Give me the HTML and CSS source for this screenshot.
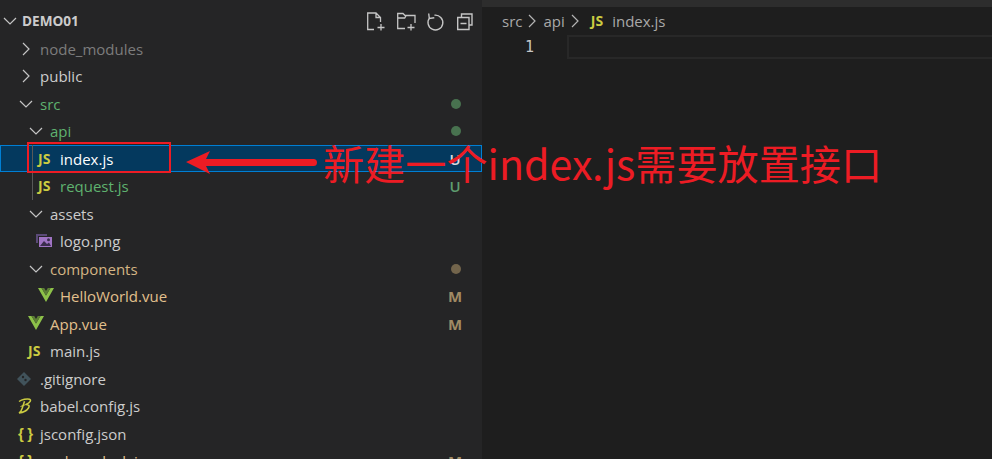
FILE: index.html
```html
<!DOCTYPE html>
<html lang="zh">
<head>
<meta charset="utf-8">
<title>DEMO01</title>
<link rel="stylesheet" href="styles.css">
</head>
<body>
<svg class="defs" width="0" height="0" aria-hidden="true">
  <defs>
    <symbol id="down" viewBox="0 0 16 16"><path d="M2 5l6 6 6-6" fill="none" stroke="currentColor" stroke-width="1.200"/></symbol>
    <symbol id="right" viewBox="0 0 16 16"><path d="M5 2l6 6-6 6" fill="none" stroke="currentColor" stroke-width="1.200"/></symbol>
    <symbol id="vue" viewBox="0 0 16 14"><path d="M0 0h3.500L8 7.500 12.500 0H16L8 14z" fill="#8dc149"/><path d="M3.500 0h2.700L8 3l1.800-3h2.700L8 7.500z" fill="#5d7f35"/></symbol>
    <symbol id="babel" viewBox="0 0 14 16"><path d="M1 3.500C4 1.500 9 .5 11.500 1.200c2 .6 1 3.200-3.500 5.300 3 0 3.800 1.500 2.500 3.500C9 12.300 5 14.500 1 15c1.500-.8 2.500-2.500 3.300-5L6.500 3.200" fill="none" stroke="#cbcb41" stroke-width="1.500"/><path d="M2.500 8.500 8 6.500" fill="none" stroke="#cbcb41" stroke-width="1"/></symbol>
  </defs>
</svg>
<div class="window">
  <aside class="sidebar">
    <div class="row root">
      <svg class="chev"><use href="#down"/></svg>
      <span class="label">DEMO01</span>
      <span class="tools">
        <svg class="tool" viewBox="0 0 18 19"><path d="M7 17.500H.7V1h8.300l4.500 4.500V10M9 1v4.500h4.500M14 12v6.500M10.500 15.500h7" fill="none" stroke="currentColor" stroke-width="1.300"/></svg>
        <svg class="tool" viewBox="0 0 18 19"><path d="M8 16.500H.7V1.500H6L8 3.500h10V11M.7 6h7l1.500-2.500M14 12v6.500M10.500 15.500h7" fill="none" stroke="currentColor" stroke-width="1.300"/></svg>
        <svg class="tool" viewBox="0 0 18 19"><path d="M3 5.500a7.400 7.400 0 1 0 4.500-2.300M1.700 1.500 2.300 6.500l5-.8" fill="none" stroke="currentColor" stroke-width="1.400"/></svg>
        <svg class="tool" viewBox="0 0 18 19"><path d="M4.500 5V2h10.500v11h-3M.7 5.500h11.300v12H.7zM3.500 11.500h6" fill="none" stroke="currentColor" stroke-width="1.400"/></svg>
      </span>
    </div>
    <div class="row d0 ignored"><svg class="chev"><use href="#right"/></svg><span class="label">node_modules</span></div>
    <div class="row d0"><svg class="chev"><use href="#right"/></svg><span class="label">public</span></div>
    <div class="row d0 added"><svg class="chev"><use href="#down"/></svg><span class="label">src</span><span class="dot green"></span></div>
    <div class="row d1 added"><svg class="chev"><use href="#down"/></svg><span class="label">api</span><span class="dot green"></span></div>
    <div class="row d2 guide selected"><span class="ic js">JS</span><span class="label">index.js</span><span class="badge">U</span></div>
    <div class="row d2 guide added"><span class="ic js">JS</span><span class="label">request.js</span><span class="badge">U</span></div>
    <div class="row d1"><svg class="chev"><use href="#down"/></svg><span class="label">assets</span></div>
    <div class="row d2">
      <span class="ic"><svg class="pic" viewBox="0 0 16 13"><path d="M0 0h11v2H2v7H0z" fill="#5b4a78"/><path d="M3 3h13v10H3z" fill="#a074c4"/><circle cx="12.500" cy="5.800" r="1.500" fill="#3a2c4d"/><path d="M4 12l4-5 3 3 2-1.500 2 3.500z" fill="#3a2c4d"/></svg></span>
      <span class="label">logo.png</span>
    </div>
    <div class="row d1 modified-dim"><svg class="chev"><use href="#down"/></svg><span class="label">components</span><span class="dot tan"></span></div>
    <div class="row d2 modified"><span class="ic"><svg class="vue"><use href="#vue"/></svg></span><span class="label">HelloWorld.vue</span><span class="badge">M</span></div>
    <div class="row d1 modified"><span class="ic"><svg class="vue"><use href="#vue"/></svg></span><span class="label">App.vue</span><span class="badge">M</span></div>
    <div class="row d1"><span class="ic js">JS</span><span class="label">main.js</span></div>
    <div class="row d0"><span class="ic"><svg class="git" viewBox="0 0 14 14"><path d="M7 0l7 7-7 7-7-7z" fill="#41535b"/><circle cx="6" cy="5" r="1.200" fill="#252526"/><circle cx="8.500" cy="8" r="1.200" fill="#252526"/></svg></span><span class="label">.gitignore</span></div>
    <div class="row d0"><span class="ic"><svg class="babel"><use href="#babel"/></svg></span><span class="label">babel.config.js</span></div>
    <div class="row d0"><span class="ic json">{}</span><span class="label">jsconfig.json</span></div>
    <div class="row d0 modified"><span class="ic json">{}</span><span class="label">package-lock.json</span><span class="badge">M</span></div>
  </aside>
  <main class="editor">
    <div class="tabstrip"></div>
    <nav class="crumbs">
      <span>src</span><svg class="crumb-chev"><use href="#right"/></svg>
      <span>api</span><svg class="crumb-chev"><use href="#right"/></svg>
      <span class="crumb-js">JS</span><span>index.js</span>
    </nav>
    <div class="line">
      <span class="line-no">1</span>
      <div class="line-current"></div>
    </div>
  </main>
</div>
<div class="callout-box"></div>
<svg class="callout-arrow" viewBox="0 0 131 23"><path d="M0 11 24 0l-4 8h107.500a3.500 3.500 0 0 1 0 7H20l4 8z" fill="#ed1c24"/></svg>
<div class="callout-text">新建一个index.js需要放置接口</div>
</body>
</html>
```

FILE: styles.css
```css
* { box-sizing: border-box; }
html, body { margin: 0; height: 100%; overflow: hidden; background: #1e1e1e; }
body { position: relative; font-family: "Open Sans", "Noto Sans", sans-serif; font-size: 15px; line-height: 20px; color: #cccccc; }
.defs { position: absolute; }
.window { display: flex; height: 459px; }

.sidebar { width: 482px; flex: none; background: #252526; padding-top: 8px; overflow: hidden; }
.row { display: flex; align-items: center; height: 28px; white-space: nowrap; }
.row:nth-child(odd) { height: 27px; padding-bottom: 1px; }
.label { flex: none; }
.root { padding-left: 2px; font-weight: 700; font-size: 13.600px; color: #cccccc; }
.d0 { padding-left: 18px; }
.d1 { padding-left: 28px; }
.d2 { padding-left: 38px; }

.chev { width: 16px; height: 16px; flex: none; color: #c5c5c5; margin-right: 6px; }
.root .chev { margin-right: 4px; }
.ic { width: 22px; flex: none; display: flex; align-items: center; }
.js { font-weight: 700; font-size: 14px; color: #cbcb41; }
.json { font-family: "Liberation Sans", sans-serif; font-weight: 700; font-size: 15px; color: #cbcb41; letter-spacing: 3.500px; }
.pic { width: 16px; height: 13px; margin-top: -2px; margin-left: -2px; }
.vue { width: 16px; height: 14px; margin-top: -3px; }
.git { width: 14px; height: 14px; margin-left: -1px; margin-top: -1px; }
.babel { width: 14px; height: 16px; margin-top: -1px; }

.ignored .label { color: #7c7c7c; }
.added .label { color: #5fb26f; }
.modified .label { color: #e2c08d; }
.modified-dim .label { color: #d5b584; }

.badge { margin-left: auto; margin-right: 20px; width: 14px; text-align: center; font-weight: 600; font-size: 15px; }
.added .badge { color: #5e9d6f; }
.modified .badge { color: #a08a63; font-weight: 700; }
.dot { margin-left: auto; margin-right: 21px; width: 10px; height: 10px; border-radius: 50%; }
.green { background: #48724f; }
.tan { background: #73654c; }

.guide { position: relative; }
.guide::before { content: ""; position: absolute; left: 32px; top: 0; bottom: 0; width: 1px; background: #585858; }
.selected { height: 27px; margin-bottom: 1px; padding-top: 1px; background: #04395e; outline: 1px solid #007fd4; outline-offset: -1px; }
.selected .label { color: #ffffff; }
.selected .badge { color: #d7dde2; }
.selected + .guide::before { top: -1px; }

.tools { margin-left: auto; margin-right: 7px; display: flex; gap: 12px; color: #c5c5c5; }
.tool { width: 18px; height: 19px; flex: none; overflow: visible; }

.editor { flex: 1; display: flex; flex-direction: column; min-width: 0; background: #1e1e1e; }
.tabstrip { height: 7px; background: #2d2d2d; }
.crumbs { height: 28px; padding-left: 20px; display: flex; align-items: center; color: #a9a9a9; font-size: 15px; }
.crumb-chev { width: 16px; height: 16px; margin: 0 3px 0 2px; color: #b4b4b4; }
.crumb-js { font-weight: 700; font-size: 14px; color: #cbcb41; margin: 0 9px 0 5px; }
.line { display: flex; height: 24px; }
.line-no { width: 52px; text-align: right; font-family: "DejaVu Sans Mono", monospace; font-size: 15px; line-height: 24px; color: #c6c6c6; flex: none; }
.line-current { margin-left: 33px; flex: 1; border: 2px solid #282828; border-right: 0; }

.callout-box { position: absolute; left: 27px; top: 142px; width: 144px; height: 31px; border: 2px solid #ed1c24; }
.callout-arrow { position: absolute; left: 186px; top: 151px; width: 131px; height: 23px; }
.callout-text { position: absolute; left: 323px; top: 132px; font-family: "Noto Sans CJK SC", "Open Sans", sans-serif; font-size: 41.150px; line-height: 60px; color: #ed1c24; white-space: nowrap; }
```
